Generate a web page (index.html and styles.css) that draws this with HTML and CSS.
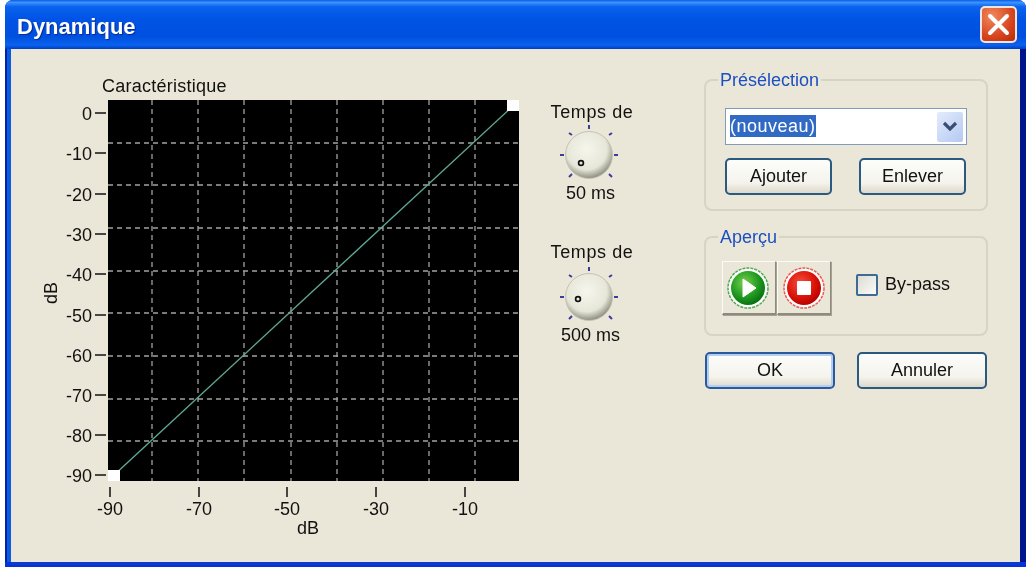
FILE: index.html
```html
<!DOCTYPE html>
<html lang="fr">
  <head>
    <meta charset="UTF-8" />
    <title>Dynamique</title>
    <link rel="stylesheet" href="styles.css">
  </head>
  <body>
    <div class="window">
      <div class="titlebar">
        <span class="title">Dynamique</span>
        <button class="close-btn" aria-label="Fermer">
          <svg width="23" height="23" viewBox="0 0 23 23"><path d="M3 3 L20 20 M20 3 L3 20" stroke="#fff" stroke-width="4" stroke-linecap="round"/></svg>
        </button>
      </div>

      <div class="client">
        <svg class="chart" width="490" height="480" viewBox="40 74 490 480">
          <text class="lbl chart-title" x="102" y="92">Caractéristique</text>
          <rect x="108" y="100" width="411" height="381" fill="#000"/>
          <path class="grid" d="M152 100V481 M198 100V481 M244 100V481 M291 100V481 M337 100V481 M383 100V481 M429 100V481 M475 100V481"/>
          <path class="grid" d="M108 143H519 M108 185H519 M108 228H519 M108 271H519 M108 313H519 M108 356H519 M108 399H519 M108 441H519"/>
          <path d="M113 476L514 105" stroke="#5fa896" stroke-width="1.4" fill="none"/>
          <rect x="108" y="470" width="12" height="11" fill="#fff"/>
          <rect x="507" y="100" width="12" height="11" fill="#fff"/>

          <path class="tick" d="M95 113H106 M95 153H106 M95 194H106 M95 234H106 M95 274H106 M95 315H106 M95 355H106 M95 395H106 M95 435H106 M95 475H106"/>
          <path class="tick" d="M110 487V497 M199 487V497 M287 487V497 M376 487V497 M465 487V497"/>
          <g class="ylabels">
            <text x="92" y="120">0</text>
            <text x="92" y="160">-10</text>
            <text x="92" y="201">-20</text>
            <text x="92" y="241">-30</text>
            <text x="92" y="281">-40</text>
            <text x="92" y="322">-50</text>
            <text x="92" y="362">-60</text>
            <text x="92" y="402">-70</text>
            <text x="92" y="442">-80</text>
            <text x="92" y="482">-90</text>
          </g>
          <g class="xlabels">
            <text x="110" y="515">-90</text>
            <text x="199" y="515">-70</text>
            <text x="287" y="515">-50</text>
            <text x="376" y="515">-30</text>
            <text x="465" y="515">-10</text>
            <text x="308" y="534">dB</text>
          </g>
          <text class="lbl ytitle" transform="translate(57 293) rotate(-90)">dB</text>
        </svg>

        <div class="knobs">
          <div class="knob">
            <span>Temps de</span>
            <svg width="70" height="64" viewBox="0 0 70 64">
              <defs>
                <radialGradient id="knobFill" cx="45%" cy="38%" r="62%">
                  <stop offset="0" stop-color="#f6f6ee"/>
                  <stop offset="0.7" stop-color="#e6e6d8"/>
                  <stop offset="1" stop-color="#8d8d80"/>
                </radialGradient>
              </defs>
              <path class="marks" d="M32 2V6 M12 10L15 12 M52 12L55 10 M3 32H7 M57 32H61 M12 54L15 51 M52 51L55 54"/>
              <circle cx="32" cy="32" r="23.5" fill="url(#knobFill)" stroke="#c4c4b4"/>
              <circle cx="24" cy="40" r="2.4" fill="none" stroke="#111" stroke-width="1.7"/>
            </svg>
            <span class="knob-value">50 ms</span>
          </div>
          <div class="knob">
            <span>Temps de</span>
            <svg width="70" height="64" viewBox="0 0 70 64">
              <path class="marks" d="M32 2V6 M12 10L15 12 M52 12L55 10 M3 32H7 M57 32H61 M12 54L15 51 M52 51L55 54"/>
              <circle cx="32" cy="32" r="23.5" fill="url(#knobFill)" stroke="#c4c4b4"/>
              <circle cx="21" cy="34" r="2.4" fill="none" stroke="#111" stroke-width="1.7"/>
            </svg>
            <span class="knob-value">500 ms</span>
          </div>
        </div>

        <div class="side">
          <fieldset class="group preset">
            <legend>Présélection</legend>
            <div class="combo">
              <span class="combo-text"><span class="selected">(nouveau)</span></span>
              <span class="combo-arrow">
                <svg width="16" height="11" viewBox="0 0 16 11"><path d="M2 2L8 8L14 2" fill="none" stroke="#3a4d75" stroke-width="3.2"/></svg>
              </span>
            </div>
            <div class="btn-row">
              <button class="btn small">Ajouter</button>
              <button class="btn small">Enlever</button>
            </div>
          </fieldset>

          <fieldset class="group preview">
            <legend>Aperçu</legend>
            <div class="tool-row">
              <button class="tool">
                <svg width="44" height="44" viewBox="0 0 44 44">
                  <defs>
                    <radialGradient id="greenFill" cx="40%" cy="35%" r="70%">
                      <stop offset="0" stop-color="#7ad050"/>
                      <stop offset="0.6" stop-color="#1f9a1f"/>
                      <stop offset="1" stop-color="#066a10"/>
                    </radialGradient>
                    <radialGradient id="redFill" cx="40%" cy="35%" r="70%">
                      <stop offset="0" stop-color="#f25040"/>
                      <stop offset="0.6" stop-color="#dc1408"/>
                      <stop offset="1" stop-color="#b00000"/>
                    </radialGradient>
                  </defs>
                  <circle cx="21" cy="22" r="20" fill="#fff" stroke="#4fa84f" stroke-width="1.5" stroke-dasharray="3 1"/>
                  <circle cx="21" cy="22" r="17" fill="url(#greenFill)"/>
                  <path d="M16 13L29 22L16 31Z" fill="#fff" stroke="#fff" stroke-linejoin="round"/>
                </svg>
              </button>
              <button class="tool">
                <svg width="44" height="44" viewBox="0 0 44 44">
                  <circle cx="22" cy="22" r="20" fill="#fff" stroke="#e85a50" stroke-width="1.5" stroke-dasharray="3 1"/>
                  <circle cx="22" cy="22" r="17" fill="url(#redFill)"/>
                  <rect x="15" y="15" width="14" height="14" rx="1" fill="#fff"/>
                </svg>
              </button>
              <label class="check"><span class="box"></span>By-pass</label>
            </div>
          </fieldset>

          <div class="btn-row actions">
            <button class="btn wide default">OK</button>
            <button class="btn wide">Annuler</button>
          </div>
        </div>
      </div>
    </div>
  </body>
</html>
```

FILE: styles.css
```css
html, body {
  margin: 0;
  padding: 0;
  background: #fff;
  overflow: hidden;
}

body {
  font-family: "Liberation Sans", Arial, sans-serif;
  font-size: 18px;
  color: #111;
}

.window {
  margin-left: 5px;
  width: 1021px;
  height: 567px;
  display: flex;
  flex-direction: column;
  background: #0831d9;
  border-radius: 8px 8px 0 0;
  filter: blur(0.4px);
}

.titlebar {
  height: 49px;
  flex: none;
  display: flex;
  align-items: center;
  justify-content: space-between;
  padding: 0 9px 0 12px;
  border-radius: 8px 8px 0 0;
  background: linear-gradient(#0a5ce8 0, #3c94fb 5%, #0a62ee 14%, #0053e4 40%, #0050e0 75%, #0a62ee 92%, #003dc4 100%);
}

.title {
  font-size: 22px;
  font-weight: bold;
  color: #fff;
  padding-top: 4px;
  text-shadow: 1px 1px 1px #0a2a90;
}

.close-btn {
  width: 37px;
  height: 37px;
  padding: 0;
  display: flex;
  align-items: center;
  justify-content: center;
  border: 2px solid #f3e4dc;
  border-radius: 5px;
  background: radial-gradient(circle at 30% 25%, #f08a5e, #d8451f 60%, #b72a0c);
}

.client {
  flex: 1;
  display: flex;
  margin: 0 6px 5px 6px;
  background: #ebe7d8;
  box-shadow: -4px 0 0 #0a5ae2, -6px 0 0 #00249c, 0 3px 0 #0a3cd0, 6px 0 0 #00138c;
}

.chart {
  flex: none;
  margin: 25px 0 0 29px;
}

.lbl,
.ylabels,
.xlabels {
  font-family: "Liberation Sans", Arial, sans-serif;
  font-size: 18px;
  fill: #111;
}

.chart-title {
  letter-spacing: 0.25px;
}

.ylabels {
  text-anchor: end;
}

.xlabels {
  text-anchor: middle;
}

.ytitle {
  text-anchor: middle;
}

.grid {
  fill: none;
  stroke: #a2a29e;
  stroke-width: 1.3;
  stroke-dasharray: 5 4;
}

.tick {
  fill: none;
  stroke: #111;
  stroke-width: 1.5;
}

.knobs {
  flex: none;
  width: 104px;
  margin-left: 10px;
  padding-top: 54px;
  display: flex;
  flex-direction: column;
  gap: 41px;
}

.knob {
  display: flex;
  flex-direction: column;
  align-items: center;
  line-height: 18px;
}

.knob span:first-child {
  letter-spacing: 0.6px;
}

.knob-value {
  margin-right: 3px;
}

.knob svg {
  display: block;
  margin: 2px 0 -3px;
  overflow: visible;
}

.knob + .knob svg {
  margin-top: 4px;
}

.marks {
  fill: none;
  stroke: #3c3c9a;
  stroke-width: 2;
}

.side {
  flex: none;
  width: 284px;
  margin-left: 60px;
  padding-top: 22px;
  display: flex;
  flex-direction: column;
}

.group {
  margin: 0;
  padding: 0 19px;
  border: 2px solid #d8d4c4;
  border-radius: 8px;
  box-sizing: border-box;
}

.group legend {
  margin-left: -7px;
  padding: 0 2px;
  color: #1c4fc0;
  line-height: 18px;
}

.preset {
  height: 140px;
}

.preview {
  height: 108px;
  margin-top: 17px;
}

.combo {
  margin-top: 19px;
  height: 37px;
  width: 242px;
  box-sizing: border-box;
  display: flex;
  align-items: center;
  justify-content: space-between;
  padding: 0 3px 0 4px;
  border: 1.5px solid #7f9db9;
  background: #fff;
}

.selected {
  background: #316ac5;
  color: #fff;
  padding: 1px 0;
  letter-spacing: 0.5px;
}

.combo-arrow {
  width: 26px;
  height: 30px;
  display: flex;
  align-items: center;
  justify-content: center;
  border-radius: 2px;
  background: linear-gradient(135deg, #e4ecfc, #b4c8f2);
}

.btn-row {
  display: flex;
  justify-content: space-between;
}

.preset .btn-row {
  margin-top: 13px;
  width: 241px;
}

.btn {
  padding: 0;
  font: inherit;
  color: #111;
  border: 2px solid #2a5a80;
  border-radius: 5px;
  background: linear-gradient(#fdfdfb, #f4f3ec 70%, #dcd8ca);
}

.small {
  width: 107px;
  height: 37px;
}

.wide {
  width: 130px;
  height: 37px;
}

.default {
  border-color: #2a5a9c;
  box-shadow: inset 0 0 0 2px #b4cdf0;
}

.actions {
  margin-top: 16px;
  padding: 0 1px;
}

.tool-row {
  display: flex;
  align-items: center;
  margin-top: 15px;
  margin-left: -3px;
}

.tool {
  width: 54px;
  height: 54px;
  margin-right: 1px;
  padding: 0;
  display: flex;
  align-items: center;
  justify-content: center;
  background: #ebe7d8;
  border: 1px solid;
  border-color: #fbfaf5 #8e8b7c #8e8b7c #fbfaf5;
  border-bottom-width: 2px;
  box-shadow: 1px 1px 0 #a5a294;
}

.check {
  display: flex;
  align-items: center;
  margin: 0 0 7px 24px;
  gap: 7px;
}

.box {
  width: 22px;
  height: 22px;
  box-sizing: border-box;
  border: 2px solid #3f6a94;
  border-radius: 2px;
  background: linear-gradient(135deg, #dcdcd4, #fbfbf8);
}
```
